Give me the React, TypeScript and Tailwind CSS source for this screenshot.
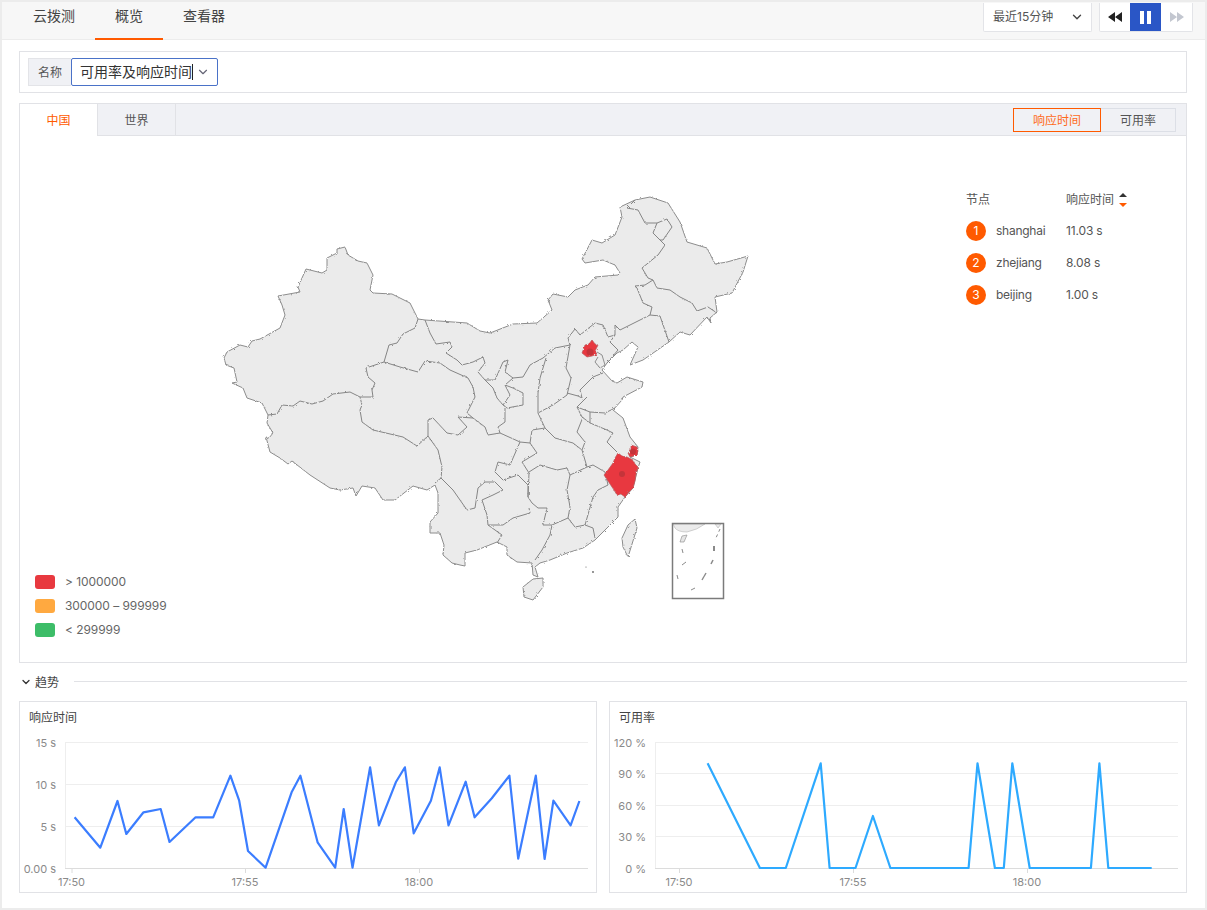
import { ChevronDown } from "lucide-react";

const FONT = 'Inter, "Noto Sans CJK SC", sans-serif';

const OUTER =
  "337,249 345,247 348,255 358,261 367,263 373,275 370,290 373,293 392,294 410,303 418,319 425,320 467,323 480,331 490,333 513,324 537,323 552,310 548,300 553,294 568,297 575,290 588,285 595,277 618,275 620,273 615,265 603,260 585,263 582,259 592,240 602,243 615,235 622,217 620,207 635,200 650,197 668,203 680,222 687,242 707,248 715,264 727,262 748,256 743,272 732,293 715,297 717,312 710,318 711,323 707,317 690,335 680,332 669,342 643,360 630,365 638,347 632,342 623,350 617,353 607,363 602,370 612,381 617,383 627,377 643,382 642,387 623,397 622,400 613,410 623,418 630,437 638,447 637,455 630,457 640,462 638,468 633,488 625,497 618,507 618,517 607,528 595,540 583,548 567,553 550,560 540,563 535,567 538,577 533,575 532,563 517,562 507,555 507,547 497,542 477,550 465,553 465,566 460,565 452,563 443,555 444,545 440,533 430,533 430,522 438,513 438,493 435,485 427,490 413,486 395,500 383,500 375,488 362,486 356,496 353,488 340,490 330,488 310,475 292,461 288,464 280,458 270,452 266,437 269,438 273,433 267,423 268,415 262,403 247,398 243,388 232,383 237,382 234,368 226,365 224,358 227,352 240,345 248,347 252,341 260,339 280,328 285,315 282,305 278,296 300,292 298,287 306,269 322,273 327,270 327,258 337,253";

const BOUNDARIES = [
  "418,319 415,328 403,334 397,343 389,345 384,362 366,368 368,377 375,383 372,390 373,397 360,397 350,392 333,394 323,401 312,404 300,401 293,406 282,405 277,414 268,415",
  "360,397 362,405 360,410 362,422 373,430 403,437 417,446 428,436 438,450 442,467 441,478 435,483",
  "425,320 430,333 436,344 450,342 452,347 446,353 457,360 462,365 473,362 483,357 485,363 478,372 485,380 495,380 503,362 508,360 505,372 513,378 523,377 530,365 543,358 555,348 570,345 568,338 575,329 580,335 595,323 603,325 608,337 615,335 615,325 620,330 650,315 660,316 669,342",
  "615,335 610,342 618,350 607,363",
  "650,315 652,307 643,303 637,288 635,286 645,285 653,280 657,288 670,290 680,297 692,303 697,311 708,307 717,313",
  "648,278 642,268 658,255 665,245 660,240 653,233 657,223 645,223 638,210 627,208 635,200",
  "657,223 667,219 672,227 663,240 660,240",
  "653,280 648,278",
  "570,345 566,368 571,378 567,395 553,405 538,413",
  "546,358 540,378 538,393 538,413 545,428 555,438 573,443 582,450 587,467",
  "567,393 578,396 582,398 580,390 593,377 603,373",
  "587,397 577,407 590,412 605,413 615,408",
  "583,417 577,432 585,442 582,450",
  "577,407 582,417 590,423 590,412",
  "590,423 607,430 613,433 607,442 617,452",
  "587,467 593,465 605,472",
  "384,362 400,367 418,372 425,361 440,363 450,370 468,378 473,387 475,397 467,413 473,418",
  "428,436 428,420 433,418 447,433 458,435 467,427 458,417 473,418 485,427 488,435 500,433 520,442 510,465 498,462 495,472 503,480 518,475 528,485 528,497",
  "485,380 493,388 497,398 503,405 510,395 505,385 513,378",
  "505,385 513,388 523,393 523,405 507,408 503,405",
  "505,408 505,422 498,427 500,433",
  "520,442 530,443 537,453 522,462 529,473 528,497",
  "530,443 532,430 545,428",
  "529,472 540,465 557,470 567,468 570,475 587,467",
  "570,475 567,490 570,507 568,518 575,527 585,525",
  "605,472 608,485 598,490 593,497 585,525 593,528 595,538",
  "568,518 552,525 543,525 547,508 538,508 532,503 528,497",
  "529,508 530,513 513,518 503,525 488,525 487,515 482,500 493,495 503,490 495,482 485,482 478,488 475,508 467,510 453,490 443,480 441,478",
  "488,525 502,535 497,543",
  "552,525 550,535 542,550 535,560",
];

const ZHEJIANG =
  "618,453 622,456 627,457 633,460 635,464 638,467 636,474 635,481 633,488 629,492 625,497 621,494 617,495 614,490 612,487 608,481 604,475 608,470 613,463 615,458";
const SHANGHAI = "631,445 637,447 638,451 637,455 630,457 628,453 631,451";
const BEIJING = "592,340 595,344 598,345 596,349 595,351 597,354 592,356 587,357 582,353 584,348 585,345 589,344";

const LEFT_POINTS: [number, number][] = [
  [195, 472], [262, 563], [307, 423], [330, 522], [375, 457], [420, 447], [443, 546], [511, 472], [557, 472], [602, 347], [625, 422], [648, 573], [694, 623], [762, 397], [785, 347], [830, 547], [876, 623], [898, 447], [921, 623], [967, 322], [990, 496], [1035, 365], [1058, 322], [1081, 520], [1126, 422], [1149, 322], [1172, 496], [1217, 365], [1240, 472], [1285, 415], [1331, 347], [1354, 596], [1400, 347], [1423, 597], [1446, 422], [1491, 496], [1514, 423],
];
const RIGHT_POINTS: [number, number][] = [
  [278, 220], [413, 534], [480, 534], [570, 220], [593, 534], [660, 534], [705, 378], [750, 534], [952, 534], [975, 220], [1020, 534], [1043, 534], [1065, 220], [1110, 534], [1268, 534], [1290, 220], [1313, 534], [1425, 534],
];

const leftLine = LEFT_POINTS.map(([x, y]) => `${(x / 2.613).toFixed(1)},${(660 + y / 3).toFixed(1)}`).join(" ");
const rightLine = RIGHT_POINTS.map(([x, y]) => `${(600 + x / 2.583).toFixed(1)},${(690 + y / 3).toFixed(1)}`).join(" ");

function MapDrawing() {
  return (
    <svg className="absolute inset-0 h-full w-full" viewBox="20 136 1166 526">
      <defs>
        <filter id="rough" x="-5%" y="-5%" width="110%" height="110%">
          <feTurbulence type="fractalNoise" baseFrequency="0.45" numOctaves="2" seed="4" />
          <feDisplacementMap in="SourceGraphic" scale="2.6" />
          <feGaussianBlur stdDeviation="0.25" />
        </filter>
      </defs>
      <g filter="url(#rough)" strokeLinejoin="round">
        <polygon points={OUTER} fill="#ebebeb" stroke="#8c8c8c" strokeWidth="1" />
        {BOUNDARIES.map((b) => (
          <polyline key={b} points={b} fill="none" stroke="#858585" strokeWidth="1" />
        ))}
        <polygon points="523,587 533,579 543,578 543,587 533,600 524,597" fill="#ebebeb" stroke="#8c8c8c" strokeWidth="1" />
        <polygon points="635,519 637,528 628,557 623,547 622,538 628,525" fill="#ebebeb" stroke="#8c8c8c" strokeWidth="1" />
        <polygon points={ZHEJIANG} fill="#e8393f" stroke="#b9565a" strokeWidth="0.7" />
        <polygon points={SHANGHAI} fill="#e8393f" stroke="#b9565a" strokeWidth="0.7" />
        <polygon points={BEIJING} fill="#e8393f" stroke="#b9565a" strokeWidth="0.7" />
        <polyline points="597,352 602,355 605,365 600,368 595,362 598,357" fill="#ebebeb" stroke="#858585" strokeWidth="0.9" />
      </g>
      <circle cx="622" cy="474" r="3" fill="#c4343a" />
      <circle cx="633" cy="451.5" r="3" fill="#c4343a" />
      <circle cx="590" cy="352" r="3.5" fill="#c4343a" />
      <circle cx="586" cy="567" r="0.6" fill="#666" />
      <circle cx="593" cy="572" r="0.9" fill="#666" />
      <path d="M673 524H705Q697 530 687 532Q678 532 675 528Z" fill="#ebebeb" stroke="#aaa" strokeWidth="0.5" />
      <path d="M715 524L718 528L721 524Z" fill="#ebebeb" stroke="#aaa" strokeWidth="0.5" />
      <rect x="672.5" y="523.5" width="51" height="75" fill="none" stroke="#7b7b7b" strokeWidth="1.5" />
      <polygon points="682,536 687,535 684,542 680,542" fill="#e5e5e5" stroke="#888" strokeWidth="0.6" />
      <g stroke="#8a8a8a" strokeWidth="1" fill="none">
        <path d="M720 529L715 540" strokeDasharray="3 3" />
        <path d="M714 546V551" strokeWidth="2" />
        <path d="M713 560L711 564" strokeWidth="1.5" />
        <path d="M706 573L702 580" strokeWidth="1.4" />
        <path d="M695 588L691 590" />
        <path d="M677 575L678 579" />
        <path d="M686 562L682 565" />
        <path d="M682 549L683 553" />
      </g>
    </svg>
  );
}

function AxisLabel({ x, y, anchor, children }: { x: number; y: number; anchor: "end" | "middle"; children: string }) {
  return (
    <text x={x} y={y} textAnchor={anchor} fontSize="11" fill="#8a8a8a" fontFamily={FONT}>
      {children}
    </text>
  );
}

function Chart({
  title,
  viewBox,
  left,
  right,
  grid,
  labels,
  ticks,
  line,
  color,
}: {
  title: string;
  viewBox: string;
  left: number;
  right: number;
  grid: number[];
  labels: string[];
  ticks: number[];
  line: string;
  color: string;
}) {
  return (
    <div className="flex h-[192px] flex-1 flex-col border border-[#e1e2e6] bg-white">
      <div className="h-[34px] pl-[9px] pt-[7px] text-[12px] leading-[18px] text-[#444]">{title}</div>
      <svg className="block h-[156px] w-full" viewBox={viewBox}>
        {grid.map((y, i) => (
          <line key={y} x1={left} x2={right} y1={y + 0.5} y2={y + 0.5} stroke={i === grid.length - 1 ? "#dcdcdc" : "#eeeeee"} />
        ))}
        <line x1={left + 0.5} x2={left + 0.5} y1={742} y2={868} stroke="#eeeeee" />
        {grid.map((y, i) => (
          <AxisLabel key={y} x={left - 9} y={y + 5} anchor="end">
            {labels[i]}
          </AxisLabel>
        ))}
        {ticks.map((x, i) => (
          <g key={x}>
            <line x1={x + 0.5} x2={x + 0.5} y1={868} y2={873} stroke="#dcdcdc" />
            <AxisLabel x={x} y={886} anchor="middle">
              {["17:50", "17:55", "18:00"][i]}
            </AxisLabel>
          </g>
        ))}
        <polyline points={line} fill="none" stroke={color} strokeWidth="2.2" strokeLinejoin="round" />
      </svg>
    </div>
  );
}

const RANK = [
  { n: "1", name: "shanghai", v: "11.03 s" },
  { n: "2", name: "zhejiang", v: "8.08 s" },
  { n: "3", name: "beijing", v: "1.00 s" },
];

const LEGEND = [
  { c: "bg-[#e8393f]", t: "> 1000000" },
  { c: "bg-[#ffa940]", t: "300000 – 999999" },
  { c: "bg-[#3dbd68]", t: "< 299999" },
];

export default function App() {
  return (
    <div
      className="flex h-[910px] w-[1207px] flex-col overflow-hidden border-x-2 border-y-2 border-[#ececec] bg-white"
      style={{ fontFamily: FONT }}
    >
      <header className="flex h-[38px] shrink-0 items-start justify-between border-b border-[#ececec] bg-[#f7f7f7] pl-[11px] pr-[12px]">
        <nav className="flex h-[38px] text-[14px] text-[#444]">
          <div className="h-full px-5 pt-[4px] leading-[20px]">云拨测</div>
          <div className="h-full border-b-2 border-[#ff5a00] px-5 pt-[4px] leading-[20px]">概览</div>
          <div className="h-full px-5 pt-[4px] leading-[20px]">查看器</div>
        </nav>
        <div className="mt-[1px] flex gap-[7px]">
          <div className="flex h-[29px] w-[109px] items-center justify-between rounded-b-[2px] border border-t-0 border-[#e3e4e8] bg-white pl-[9px] pr-[7px] text-[12px] text-[#555]">
            <span>最近15分钟</span>
            <ChevronDown size={14} color="#444" strokeWidth={2.4} />
          </div>
          <div className="flex h-[29px] w-[94px] overflow-hidden rounded-b-[2px] border border-t-0 border-[#e3e4e8] bg-white">
            <div className="flex w-[30px] items-center justify-center">
              <svg width="15" height="10" viewBox="0 0 15 10">
                <path d="M7 0V10L0 5ZM14 0V10L7 5Z" fill="#222" />
              </svg>
            </div>
            <div className="flex w-[31px] items-center justify-center gap-[3px] bg-[#2a56c6]">
              <div className="h-[13px] w-[4px] bg-white" />
              <div className="h-[13px] w-[4px] bg-white" />
            </div>
            <div className="flex flex-1 items-center justify-center">
              <svg width="15" height="10" viewBox="0 0 15 10">
                <path d="M1 0V10L8 5ZM8 0V10L15 5Z" fill="#c3c7d0" />
              </svg>
            </div>
          </div>
        </div>
      </header>

      <main className="flex flex-1 flex-col pl-[17px] pr-[18px] pt-[11px]">
        <div className="flex h-[42px] shrink-0 items-center border border-[#e1e2e6] pl-[8px]">
          <div className="flex h-[28px] w-[43px] items-center justify-center border border-r-0 border-[#e3e4e8] bg-[#f0f1f5] pt-px text-[12px] text-[#555]">
            名称
          </div>
          <div className="flex h-[28px] w-[147px] items-center rounded-[2px] border border-[#4a72c8] bg-white pl-[8px] text-[14px] text-[#333]">
            <span className="-mt-px">可用率及响应时间</span>
            <span className="h-[16px] w-px bg-[#222]" />
            <ChevronDown size={14} color="#667" className="ml-[3px]" />
          </div>
        </div>

        <section className="mt-[10px] flex h-[560px] shrink-0 flex-col border border-[#e1e2e6]">
          <div className="flex h-[32px] shrink-0 items-start justify-between border-b border-[#e1e2e6] bg-[#f0f1f5] pr-[10px]">
            <div className="flex h-[32px] text-[12px]">
              <div className="flex h-[32px] w-[78px] items-center justify-center border-r border-[#e1e2e6] bg-white pt-[2px] text-[#ff5a00]">
                中国
              </div>
              <div className="flex h-[31px] w-[78px] items-center justify-center border-r border-[#e1e2e6] pt-[2px] text-[#555]">
                世界
              </div>
            </div>
            <div className="mt-[4px] flex text-[12px]">
              <div className="flex h-[24px] w-[88px] items-center justify-center border border-[#ff5a00] pt-px text-[#ff6a1a]">
                响应时间
              </div>
              <div className="flex h-[24px] w-[75px] items-center justify-center border border-l-0 border-[#dcdfe6] pt-px text-[#555]">
                可用率
              </div>
            </div>
          </div>

          <div className="relative flex flex-1 items-stretch justify-between bg-white">
            <MapDrawing />
            <div className="relative flex flex-col justify-end gap-[10px] pb-[25px] pl-[15px] text-[12px] tracking-[-0.07px] text-[#666]">
              {LEGEND.map((l) => (
                <div key={l.t} className="flex h-[14px] items-center gap-[10px]">
                  <span className={`h-[14px] w-[20px] rounded-[3px] ${l.c}`} />
                  <span>{l.t}</span>
                </div>
              ))}
            </div>
            <div className="relative w-[220px] pt-[55px] text-[12px] text-[#555]">
              <div className="flex h-[18px] items-center">
                <span className="w-[100px]">节点</span>
                <span>响应时间</span>
                <svg width="8" height="14" viewBox="0 0 8 14" className="-mt-px ml-[5px]">
                  <path d="M4 0L8 4H0Z" fill="#333" />
                  <path d="M0 10H8L4 14Z" fill="#ff5a00" />
                </svg>
              </div>
              <div className="mt-[12px] flex flex-col gap-[12px]">
                {RANK.map((r) => (
                  <div key={r.n} className="flex h-[20px] items-center">
                    <span className="flex h-[20px] w-[20px] items-center justify-center rounded-full bg-[#ff5a00] text-white">
                      {r.n}
                    </span>
                    <span className="ml-[10px] w-[70px] tracking-[-0.25px]">{r.name}</span>
                    <span className="tracking-[-0.15px]">{r.v}</span>
                  </div>
                ))}
              </div>
            </div>
          </div>
        </section>

        <div className="mt-[10px] flex h-[18px] shrink-0 items-center text-[12px] text-[#444]">
          <ChevronDown size={12} color="#333" strokeWidth={2.6} className="ml-px" />
          <span className="ml-[3px] pt-px">趋势</span>
          <div className="ml-[15px] -mt-[2px] h-px flex-1 bg-[#e1e2e6]" />
        </div>

        <div className="mt-[10px] flex gap-[12px]">
          <Chart
            title="响应时间"
            viewBox="20 736 576 156"
            left={65}
            right={588}
            grid={[742, 784, 826, 868]}
            labels={["15 s", "10 s", "5 s", "0.00 s"]}
            ticks={[71.5, 245, 419]}
            line={leftLine}
            color="#3b7dff"
          />
          <Chart
            title="可用率"
            viewBox="610 736 576 156"
            left={655}
            right={1178}
            grid={[742, 773, 805, 836, 868]}
            labels={["120 %", "90 %", "60 %", "30 %", "0 %"]}
            ticks={[679, 853, 1027]}
            line={rightLine}
            color="#2eaaff"
          />
        </div>
      </main>
    </div>
  );
}
